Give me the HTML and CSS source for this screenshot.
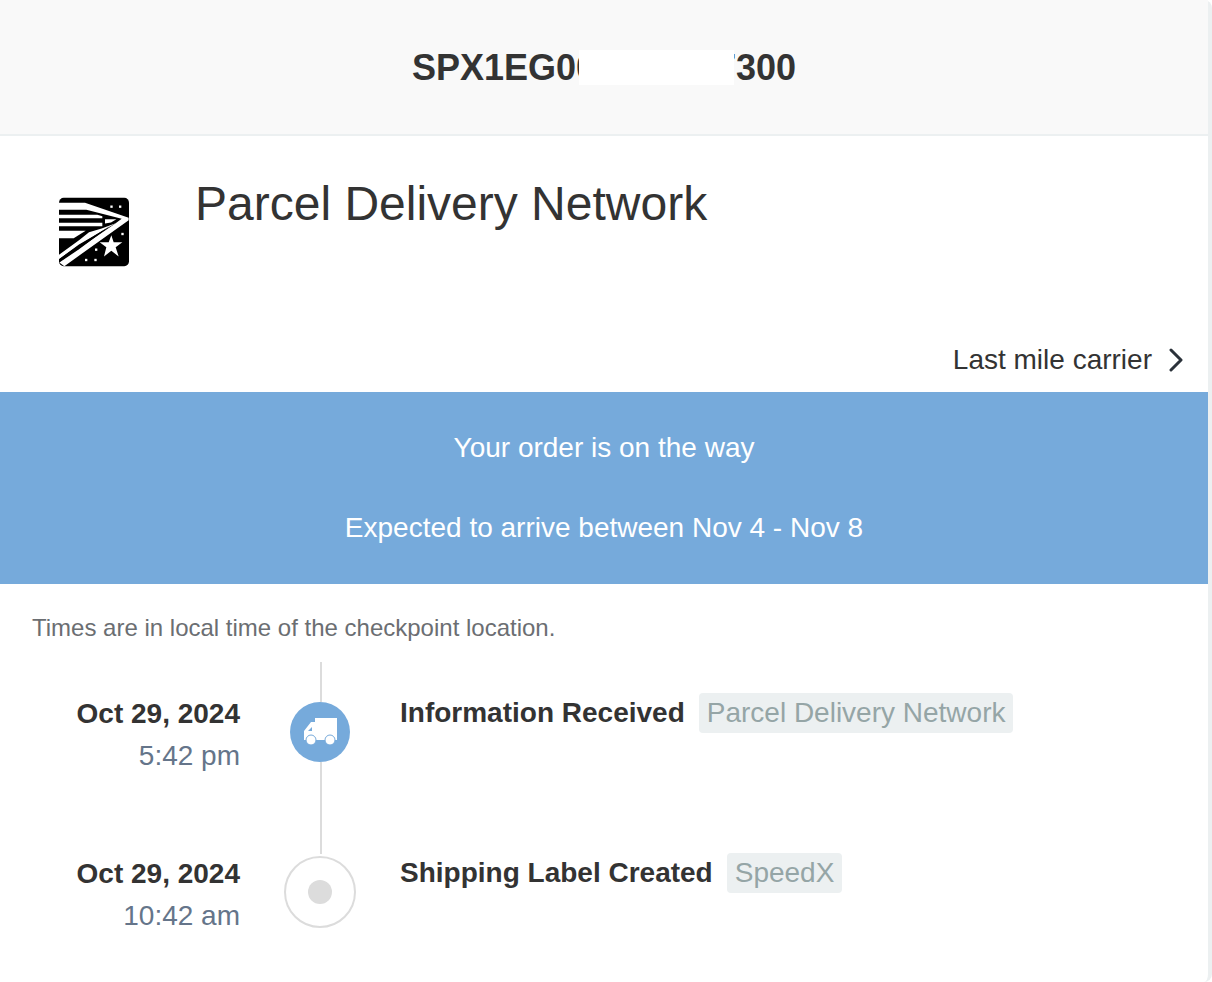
FILE: index.html
```html
<!DOCTYPE html>
<html lang="en">

<head>
    <meta charset="UTF-8">
    <meta name="viewport" content="width=device-width, initial-scale=1.0">
    <title>Parcel Delivery Network</title>
    <link rel="stylesheet" href="styles.css">
</head>

<body>
    <main class="card">
        <header>
            <h1 class="tracking">SPX1EG00<span class="hidden-digits"></span>7300</h1>
        </header>

        <section class="carrier">
            <div class="carrier-info">
                <svg class="logo" viewBox="0 0 210 205" aria-hidden="true">
                    <rect width="210" height="205" rx="14" fill="#000"/>
                    <g fill="#fff">
                        <path d="M0 15H78L209 60V67L16 205L0 193L170 76L188 63L82 36H0Z"/>
                        <path d="M0 51H115L130 55V61H0Z"/>
                        <path d="M0 75H130V85H0Z"/>
                        <path d="M0 99H80L44 121H0Z"/>
                        <path d="M0 171L60 127L90 103L128 92L170 76L60 140L0 184Z"/>
                        <path d="M138 64H172L156 74L138 77Z"/>
                        <path d="M157 112L164 133H190L170 148L179 176L157 159L135 176L142 148L122 133H149Z"/>
                        <rect x="154" y="23" width="7" height="7"/>
                        <rect x="180" y="23" width="7" height="7"/>
                        <rect x="187" y="105" width="7" height="7"/>
                        <rect x="108" y="152" width="7" height="7"/>
                        <rect x="78" y="183" width="7" height="7"/>
                        <rect x="106" y="183" width="7" height="7"/>
                    </g>
                    <path d="M0 184L60 142L154 84L60 154L0 195Z" fill="#000"/>
                </svg>
                <h2>Parcel Delivery Network</h2>
            </div>
            <a class="last-mile" href="#">Last mile carrier
                <svg class="chevron" viewBox="0 0 16 24" aria-hidden="true">
                    <path d="M3 2L13 12L3 22"/>
                </svg>
            </a>
        </section>

        <section class="status">
            <p>Your order is on the way</p>
            <p>Expected to arrive between Nov 4 - Nov 8</p>
        </section>

        <p class="note">Times are in local time of the checkpoint location.</p>

        <ol class="timeline">
            <li>
                <div class="date"><strong>Oct 29, 2024</strong><span>5:42 pm</span></div>
                <div class="marker">
                    <span class="dot active">
                        <svg class="truck" viewBox="0 0 34 28" aria-hidden="true">
                            <path d="M12 0H34V22H1V13L8 4H12Z" fill="#fff"/>
                            <path d="M5 13L9 9V13Z" fill="#76aadb"/>
                            <g fill="#fff" stroke="#76aadb">
                                <circle cx="8" cy="22" r="5"/>
                                <circle cx="27" cy="22" r="5"/>
                            </g>
                        </svg>
                    </span>
                </div>
                <div class="event"><strong>Information Received</strong><span class="tag">Parcel Delivery Network</span></div>
            </li>
            <li>
                <div class="date"><strong>Oct 29, 2024</strong><span>10:42 am</span></div>
                <div class="marker">
                    <span class="dot"></span>
                </div>
                <div class="event"><strong>Shipping Label Created</strong><span class="tag">SpeedX</span></div>
            </li>
        </ol>
    </main>
</body>

</html>
```
FILE: styles.css
```css
* {
    margin: 0;
    padding: 0;
    box-sizing: border-box;
}

body {
    background-color: white;
    color: #333;
    font-family: "Liberation Sans", Arial, sans-serif;
    font-size: 28px;
    line-height: 40px;
}

.card {
    min-height: 100vh;
    border-right: 4px solid #ecf0f1;
    border-radius: 0 8px 8px 0;
}

header {
    padding: 48px 0 46px;
    background-color: #f9f9f9;
    border-bottom: 2px solid #ecf0f1;
    text-align: center;
}

.tracking {
    font-size: 36px;
    line-height: 40px;
}

.hidden-digits {
    display: inline-block;
    position: relative;
    width: 120px;
}

/* covers the digits on both sides a little */
.hidden-digits::after {
    content: "";
    position: absolute;
    left: -17px;
    right: -18px;
    bottom: -5px;
    height: 35px;
    background-color: white;
}

.carrier {
    display: flex;
    flex-direction: column;
    justify-content: space-between;
    min-height: 256px;
    padding: 36px 24px 12px 59px;
}

.carrier-info {
    display: flex;
    gap: 66px;
}

.logo {
    width: 70px;
    height: 70px;
    margin-top: 25px;
}

h2 {
    font-size: 48px;
    font-weight: 400;
    line-height: 64px;
}

.last-mile {
    display: flex;
    align-items: center;
    align-self: flex-end;
    gap: 16px;
    color: #333;
    text-decoration: none;
}

.chevron {
    width: 16px;
    height: 24px;
    fill: none;
    stroke: #2b323a;
    stroke-width: 3;
    stroke-linecap: round;
    stroke-linejoin: round;
}

.status {
    display: flex;
    flex-direction: column;
    gap: 40px;
    padding: 36px 0;
    background-color: #76aadb;
    color: white;
    text-align: center;
}

.note {
    padding: 24px 32px 14px;
    color: #6b6e72;
    font-size: 24px;
}

.timeline {
    list-style: none;
}

.timeline li {
    display: grid;
    grid-template-columns: 240px 160px 1fr;
    min-height: 160px;
}

.date {
    display: flex;
    flex-direction: column;
    gap: 2px;
    padding-top: 32px;
    text-align: right;
}

.date span {
    color: #65758a;
}

.marker {
    display: flex;
    flex-direction: column;
    align-items: center;
}

.marker::before {
    content: "";
    width: 2px;
    height: 40px;
    margin-left: 2px;
    background-color: #dcdcdc;
}

.marker:has(.active)::after {
    content: "";
    flex: 1;
    width: 2px;
    margin-left: 2px;
    background-color: #dcdcdc;
}

.dot {
    display: flex;
    align-items: center;
    justify-content: center;
    flex: none;
    width: 72px;
    height: 72px;
    border: 2px solid #dcdcdc;
    border-radius: 50%;
}

.dot::before {
    content: "";
    width: 24px;
    height: 24px;
    border-radius: 50%;
    background-color: #dcdcdc;
}

.dot.active {
    width: 60px;
    height: 60px;
    border: none;
    background-color: #76aadb;
}

.dot.active::before {
    display: none;
}

.truck {
    width: 34px;
    height: 28px;
}

.timeline li:last-child .marker::before {
    height: 32px;
    margin-bottom: 2px;
}

.event {
    padding-top: 31px;
}

.tag {
    display: inline-block;
    margin-left: 14px;
    padding: 0 8px;
    border-radius: 4px;
    background-color: #ecf0f1;
    color: #95a5a6;
}
```
